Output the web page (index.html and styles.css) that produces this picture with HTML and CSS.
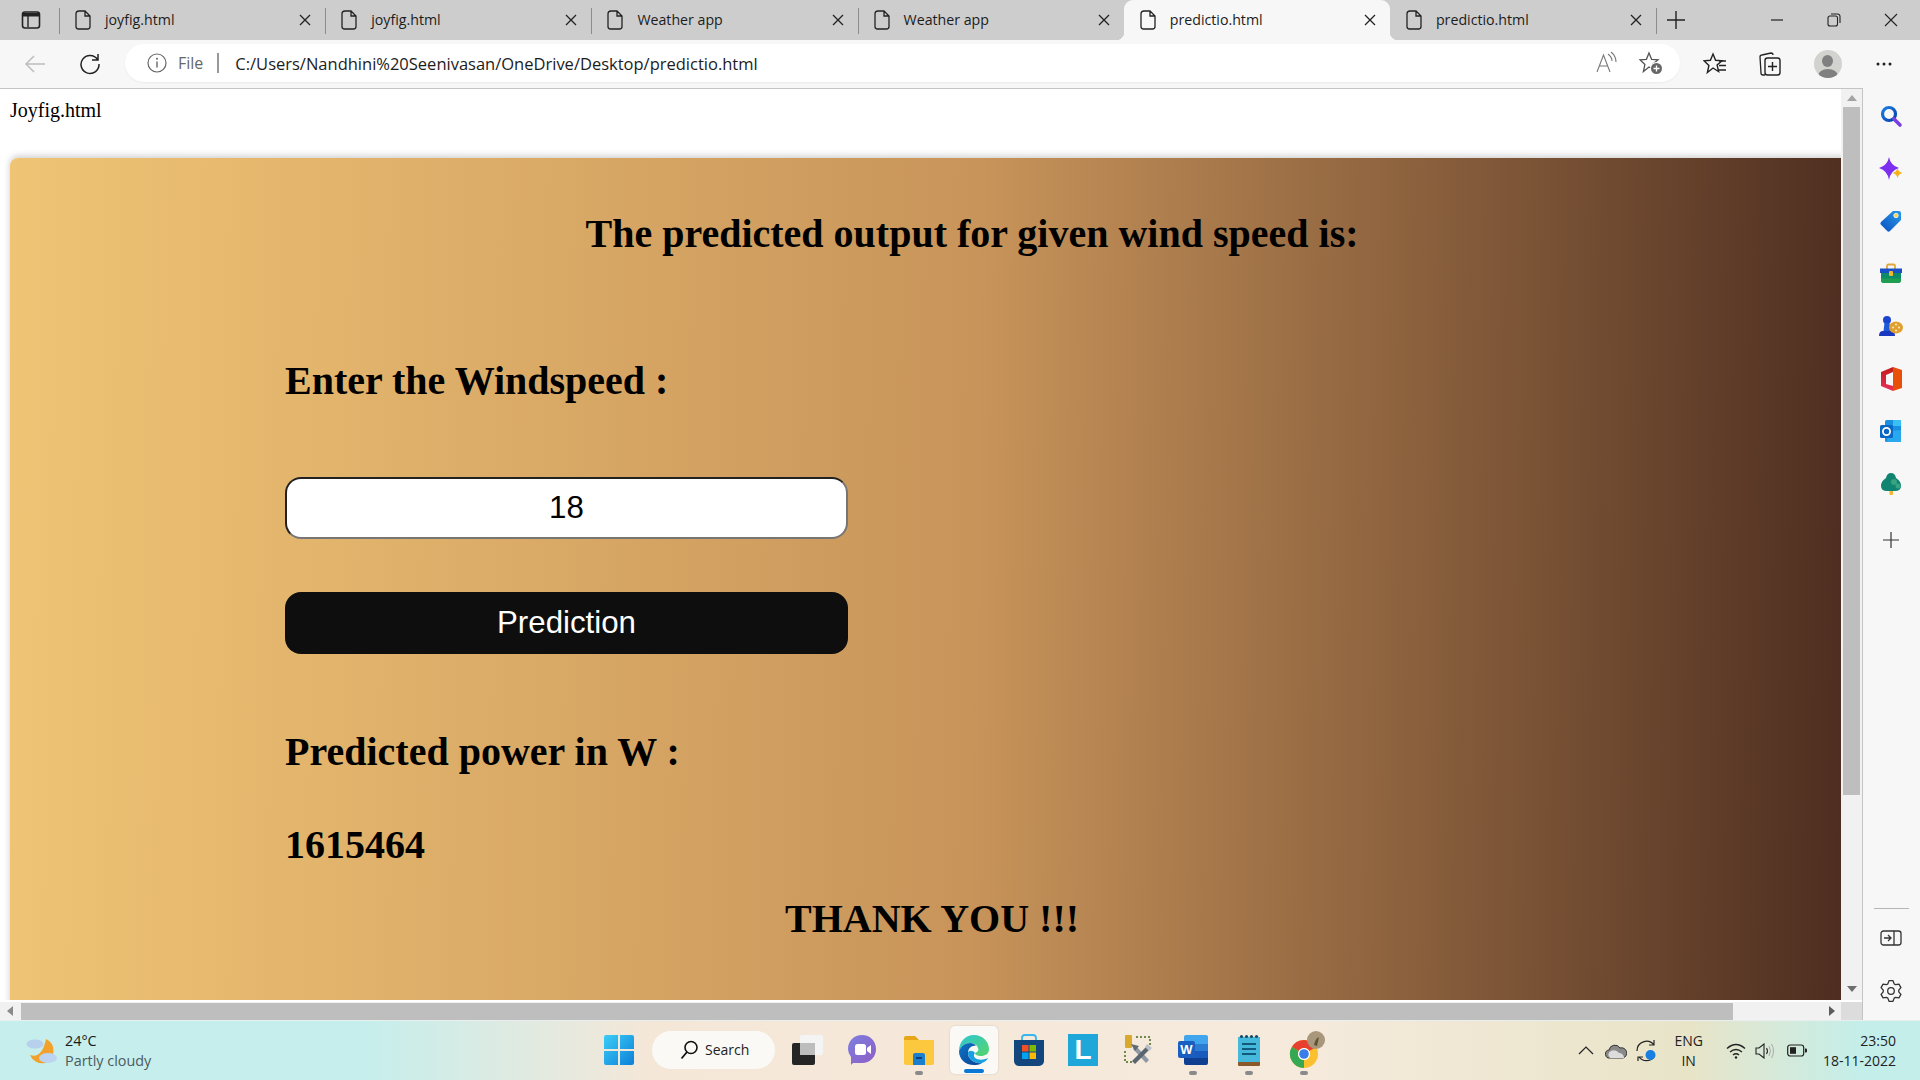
FILE: index.html
```html
<!DOCTYPE html>
<html lang="en">
<head>
<meta charset="utf-8">
<title>predictio.html</title>
<link rel="stylesheet" href="styles.css">
</head>
<body>
<div class="app">
  <div class="tabstrip">
    <div class="tabstart">
      <svg width="20" height="18" viewBox="0 0 20 18"><rect x="1.500" y="1" width="17" height="16" rx="2.500" fill="none" stroke="#222" stroke-width="1.600"/><path d="M2 2h16v3.500H2z" fill="#222"/><path d="M7 5v11" stroke="#222" stroke-width="1.400"/></svg>
    </div>
    <div class="tab sep"><svg class="doc" viewBox="0 0 16 20"><path d="M4 1h6l5 5v10.500a2.500 2.500 0 0 1-2.500 2.500h-9A2.500 2.500 0 0 1 1 16.500V4a3 3 0 0 1 3-3zM10 1v5h5" fill="none" stroke="#222" stroke-width="1.300"/></svg><span class="tabtitle">joyfig.html</span><svg class="x" viewBox="0 0 12 12"><path d="M1 1l10 10M11 1L1 11" stroke="#222" stroke-width="1.300"/></svg></div>
    <div class="tab sep"><svg class="doc" viewBox="0 0 16 20"><path d="M4 1h6l5 5v10.500a2.500 2.500 0 0 1-2.500 2.500h-9A2.500 2.500 0 0 1 1 16.500V4a3 3 0 0 1 3-3zM10 1v5h5" fill="none" stroke="#222" stroke-width="1.300"/></svg><span class="tabtitle">joyfig.html</span><svg class="x" viewBox="0 0 12 12"><path d="M1 1l10 10M11 1L1 11" stroke="#222" stroke-width="1.300"/></svg></div>
    <div class="tab sep"><svg class="doc" viewBox="0 0 16 20"><path d="M4 1h6l5 5v10.500a2.500 2.500 0 0 1-2.500 2.500h-9A2.500 2.500 0 0 1 1 16.500V4a3 3 0 0 1 3-3zM10 1v5h5" fill="none" stroke="#222" stroke-width="1.300"/></svg><span class="tabtitle">Weather app</span><svg class="x" viewBox="0 0 12 12"><path d="M1 1l10 10M11 1L1 11" stroke="#222" stroke-width="1.300"/></svg></div>
    <div class="tab"><svg class="doc" viewBox="0 0 16 20"><path d="M4 1h6l5 5v10.500a2.500 2.500 0 0 1-2.500 2.500h-9A2.500 2.500 0 0 1 1 16.500V4a3 3 0 0 1 3-3zM10 1v5h5" fill="none" stroke="#222" stroke-width="1.300"/></svg><span class="tabtitle">Weather app</span><svg class="x" viewBox="0 0 12 12"><path d="M1 1l10 10M11 1L1 11" stroke="#222" stroke-width="1.300"/></svg></div>
    <div class="tab active"><svg class="doc" viewBox="0 0 16 20"><path d="M4 1h6l5 5v10.500a2.500 2.500 0 0 1-2.500 2.500h-9A2.500 2.500 0 0 1 1 16.500V4a3 3 0 0 1 3-3zM10 1v5h5" fill="none" stroke="#222" stroke-width="1.300"/></svg><span class="tabtitle">predictio.html</span><svg class="x" viewBox="0 0 12 12"><path d="M1 1l10 10M11 1L1 11" stroke="#222" stroke-width="1.300"/></svg></div>
    <div class="tab sep"><svg class="doc" viewBox="0 0 16 20"><path d="M4 1h6l5 5v10.500a2.500 2.500 0 0 1-2.500 2.500h-9A2.500 2.500 0 0 1 1 16.500V4a3 3 0 0 1 3-3zM10 1v5h5" fill="none" stroke="#222" stroke-width="1.300"/></svg><span class="tabtitle">predictio.html</span><svg class="x" viewBox="0 0 12 12"><path d="M1 1l10 10M11 1L1 11" stroke="#222" stroke-width="1.300"/></svg></div>
    <div class="newtab"><svg width="18" height="18" viewBox="0 0 18 18"><path d="M9 0v18M0 9h18" stroke="#222" stroke-width="1.400"/></svg></div>
    <div class="wincontrols">
      <div class="winbtn"><svg width="12" height="12" viewBox="0 0 12 12"><path d="M0 6h12" stroke="#222" stroke-width="1.200"/></svg></div>
      <div class="winbtn"><svg width="14" height="14" viewBox="0 0 14 14"><rect x="1" y="3" width="9.500" height="10" rx="2" fill="none" stroke="#222" stroke-width="1.100"/><path d="M4 1h6.500A2.500 2.500 0 0 1 13 3.500V10" fill="none" stroke="#222" stroke-width="1.100"/></svg></div>
      <div class="winbtn"><svg width="14" height="14" viewBox="0 0 14 14"><path d="M1 1l12 12M13 1L1 13" stroke="#222" stroke-width="1.100"/></svg></div>
    </div>
  </div>

  <div class="toolbar">
    <div class="toolslot"><svg width="22" height="20" viewBox="0 0 22 20"><path d="M21 10H2M10 2l-8 8 8 8" fill="none" stroke="#bdbdbd" stroke-width="1.500"/></svg></div>
    <div class="toolslot"><svg width="22" height="22" viewBox="0 0 22 22"><path d="M18.500 6.500A9 9 0 1 0 20 11M19 1v6h-6" fill="none" stroke="#222" stroke-width="1.500"/></svg></div>
    <div class="addressbar">
      <svg class="info" width="20" height="20" viewBox="0 0 20 20"><circle cx="10" cy="10" r="9" fill="none" stroke="#666" stroke-width="1.200"/><path d="M10 8.500v6" stroke="#666" stroke-width="1.400"/><circle cx="10" cy="5.800" r="1" fill="#666"/></svg>
      <span class="scheme">File</span>
      <span class="addrsep"></span>
      <span class="url">C:/Users/Nandhini%20Seenivasan/OneDrive/Desktop/predictio.html</span>
      <div class="addricons">
        <svg width="24" height="24" viewBox="0 0 24 24"><path d="M2 21L8.500 4 15 21M4.500 15h8" fill="none" stroke="#777" stroke-width="1.100"/><path d="M13 3q4 3 4 7M16 1q5 4 5 10" fill="none" stroke="#777" stroke-width="1.100"/></svg>
        <svg width="24" height="24" viewBox="0 0 24 24"><path d="M10 2l2.600 6.300 6.400.5-4.900 4.200 1.500 6.500L10 16l-5.600 4.500 1.500-7L1 8.800l6.400-.5z" fill="none" stroke="#555" stroke-width="1.300"/><circle cx="17.500" cy="17.500" r="6.500" fill="#fff"/><circle cx="17.500" cy="17.500" r="5.500" fill="#666"/><path d="M17.500 14.500v6M14.500 17.500h6" stroke="#fff" stroke-width="1.300"/></svg>
      </div>
    </div>
    <div class="toolslot first"><svg width="24" height="24" viewBox="0 0 24 24"><path d="M10 2l2.600 6.300 6.400.5-4.900 4.200 1.500 6.500L10 16l-5.600 4.500 1.500-7L1 8.800l6.400-.5z" fill="none" stroke="#222" stroke-width="1.400"/><path d="M16 9h7M16 13.500h7M15 18h8" stroke="#222" stroke-width="1.400"/></svg></div>
    <div class="toolslot"><svg width="24" height="26" viewBox="0 0 24 26"><path d="M7 24H5a2 2 0 0 1-2-2L2 6a2 2 0 0 1 2-2l9-2a2 2 0 0 1 2 2" fill="none" stroke="#222" stroke-width="1.300"/><rect x="7" y="7" width="15" height="17" rx="2.500" fill="#f7f7f7" stroke="#222" stroke-width="1.400"/><path d="M14.500 11v9M10 15.500h9" stroke="#222" stroke-width="1.400"/></svg></div>
    <div class="toolslot av"><div class="avatar"><span class="avhead"></span><span class="avbody"></span></div></div>
    <div class="toolslot dots"><svg width="16" height="4" viewBox="0 0 16 4"><circle cx="2" cy="2" r="1.500" fill="#222"/><circle cx="8" cy="2" r="1.500" fill="#222"/><circle cx="14" cy="2" r="1.500" fill="#222"/></svg></div>
  </div>

  <div class="mainrow">
    <div class="pagecol">
      <div class="pagerow">
        <div class="viewport">
          <p class="filename">Joyfig.html</p>
          <div class="card">
            <h2 class="title">The predicted output for given wind speed is:</h2>
            <div class="form">
              <h2 class="enter">Enter the Windspeed :</h2>
              <input class="speed" type="text" value="18">
              <button class="predict" type="button">Prediction</button>
              <h2 class="powerlabel">Predicted power in W :</h2>
              <h2 class="powervalue">1615464</h2>
            </div>
            <h2 class="thanks">THANK YOU !!!</h2>
          </div>
        </div>
        <div class="vscroll">
          <span class="arrow up"></span>
          <div class="vthumb"></div>
          <span class="arrow down"></span>
        </div>
      </div>
      <div class="hscroll">
        <span class="arrow left"></span>
        <div class="hthumb"></div>
        <span class="arrow right"></span>
        <span class="corner"></span>
      </div>
    </div>

    <aside class="sidebar">
      <div class="sideslot"><svg width="24" height="24" viewBox="0 0 24 24"><defs><linearGradient id="sa" x1="0" y1="0" x2="1" y2="1"><stop offset="0" stop-color="#1a7fe0"/><stop offset="1" stop-color="#0a3fb0"/></linearGradient></defs><circle cx="10" cy="10" r="6.500" fill="none" stroke="url(#sa)" stroke-width="3.200"/><path d="M15 15l6 6" stroke="#7a3fe0" stroke-width="3.600" stroke-linecap="round"/></svg></div>
      <div class="sideslot"><svg width="24" height="24" viewBox="0 0 24 24"><path d="M10 0q1.500 8.500 10 11-8.500 2.500-10 12-1.500-9.500-10-12 8.500-2.500 10-11z" fill="#7d2ff0"/><path d="M18.500 11q.8 4 5 5-4.200 1-5 5-.8-4-5-5 4.200-1 5-5z" fill="#f5b21a"/></svg></div>
      <div class="sideslot"><svg width="24" height="24" viewBox="0 0 24 24"><defs><linearGradient id="sb" x1="0" y1="1" x2="1" y2="0"><stop offset="0" stop-color="#0a4fc0"/><stop offset="1" stop-color="#2a9ae8"/></linearGradient></defs><path d="M14 2h6a2 2 0 0 1 2 2v7L11 22a2 2 0 0 1-2.800 0L2 15.800a2 2 0 0 1 0-2.800z" fill="url(#sb)"/><circle cx="17" cy="6.500" r="2.200" fill="#f8d24a" stroke="#fff" stroke-width=".8"/></svg></div>
      <div class="sideslot"><svg width="24" height="24" viewBox="0 0 24 24"><path d="M8 7V4a1.500 1.500 0 0 1 1.500-1.500h5A1.500 1.500 0 0 1 16 4v3" fill="none" stroke="#e0a83a" stroke-width="1.800"/><path d="M1 6.500h22V11H1z" fill="#1a4fc8"/><path d="M2 11h20v7a3 3 0 0 1-3 3H5a3 3 0 0 1-3-3z" fill="#0c8a6a"/><path d="M2 16.500h20V18a3 3 0 0 1-3 3H5a3 3 0 0 1-3-3z" fill="#1f9e50"/><rect x="10" y="9" width="4" height="5" rx="1" fill="#f2b632"/></svg></div>
      <div class="sideslot"><svg width="24" height="24" viewBox="0 0 24 24"><circle cx="8" cy="6" r="4" fill="#1c46d0"/><path d="M5.500 9h5l1 8h-7z" fill="#1c5ad8"/><path d="M0 22q0-5 4-5h8q4 0 4 5z" fill="#1838c0"/><ellipse cx="17" cy="13.500" rx="7" ry="6" fill="#e0a030"/><g fill="#fbe6b0"><circle cx="17" cy="10.500" r="1.100"/><circle cx="14" cy="13.500" r="1.100"/><circle cx="20" cy="13.500" r="1.100"/><circle cx="17" cy="16.500" r="1.100"/></g></svg></div>
      <div class="sideslot"><svg width="24" height="26" viewBox="0 0 24 26"><defs><linearGradient id="sc" x1="0" y1="0" x2="0" y2="1"><stop offset="0" stop-color="#c01c1c"/><stop offset="1" stop-color="#e8305a"/></linearGradient></defs><path d="M2 6L14 1v5L7 9v9l7 2v5L2 20z" fill="url(#sc)"/><path d="M14 1l9 3v18l-9 3z" fill="#e8500a"/></svg></div>
      <div class="sideslot"><svg width="24" height="24" viewBox="0 0 24 24"><rect x="6" y="1" width="16" height="22" rx="1.500" fill="#1a8fe0"/><path d="M14 1h7a1 1 0 0 1 1 1v5h-8z" fill="#38c0f4"/><path d="M10 12l12-1v11a1 1 0 0 1-1 1H8z" fill="#28a8ee"/><rect x="1" y="6" width="13" height="13" rx="1.500" fill="#0a68c4"/><circle cx="7.500" cy="12.500" r="3.600" fill="none" stroke="#fff" stroke-width="1.800"/></svg></div>
      <div class="sideslot"><svg width="24" height="24" viewBox="0 0 24 24"><rect x="10.500" y="18" width="3.500" height="5" rx="1" fill="#f2b632"/><path d="M12 1q4 0 5 5 5 3 5 8 0 5-6 5H8q-6 0-6-5 0-5 5-8 1-5 5-5z" fill="#0f8470"/><circle cx="15" cy="10" r="3" fill="#3aa380"/><circle cx="19" cy="14" r="2.500" fill="#3aa380"/></svg></div>
      <div class="sideslot addslot"><svg width="16" height="16" viewBox="0 0 16 16"><path d="M8 0v16M0 8h16" stroke="#333" stroke-width="1.200"/></svg></div>
      <div class="sidebottom">
        <div class="sidedivider"></div>
        <div class="sideslot"><svg width="22" height="16" viewBox="0 0 22 16"><rect x="1" y="1" width="20" height="14" rx="2.500" fill="none" stroke="#333" stroke-width="1.300"/><path d="M14 1v14M4 8h7M8 5l3 3-3 3" fill="none" stroke="#333" stroke-width="1.300"/></svg></div>
        <div class="sideslot"><svg width="22" height="22" viewBox="0 0 22 22"><path d="M9 .69h4l1.170 3.180 1.420.82 3.340-.58 2 3.470-2.170 2.600v1.640l2.170 2.600-2 3.470-3.340-.58-1.420.82L13 21.310H9l-1.170-3.180-1.420-.82-3.340.58-2-3.470 2.170-2.600v-1.640L1.070 7.580l2-3.470 3.340.58 1.420-.82z" fill="none" stroke="#333" stroke-width="1.300" stroke-linejoin="round"/><circle cx="11" cy="11" r="3.300" fill="none" stroke="#333" stroke-width="1.300"/></svg></div>
      </div>
    </aside>
  </div>

  <div class="taskbar">
    <div class="weather">
      <svg width="32" height="30" viewBox="0 0 32 30"><path d="M20 3a13 13 0 0 1-1 24A13 13 0 0 1 4 19q12 4 16-16z" fill="#f2a22c"/><ellipse cx="9" cy="8" rx="8.500" ry="4.500" fill="#b6d0ee"/><ellipse cx="22" cy="22" rx="9" ry="5" fill="#bcd4f0"/></svg>
      <div class="weathertext"><span class="temp">24°C</span><span class="cond">Partly cloudy</span></div>
    </div>
    <div class="taskcenter">
      <div class="taskitem win"><svg width="30" height="30" viewBox="0 0 30 30"><defs><linearGradient id="ta" x1="0" y1="0" x2="1" y2="1"><stop offset="0" stop-color="#3ccdf6"/><stop offset="1" stop-color="#0c80d8"/></linearGradient></defs><path d="M2 0h12v14H0V2a2 2 0 0 1 2-2zM16 0h12a2 2 0 0 1 2 2v12H16zM0 16h14v14H2a2 2 0 0 1-2-2zM16 16h14v12a2 2 0 0 1-2 2H16z" fill="url(#ta)"/></svg></div>
      <div class="searchpill"><svg width="18" height="20" viewBox="0 0 18 20"><circle cx="11" cy="7.500" r="6" fill="none" stroke="#111" stroke-width="1.600"/><path d="M7 12l-5.500 6.500" stroke="#111" stroke-width="1.800"/></svg><span>Search</span></div>
      <div class="taskitem taskview"><svg width="32" height="30" viewBox="0 0 32 30"><rect x="9" y="0" width="23" height="20" rx="2" fill="#f4f4f4"/><rect x="1" y="8" width="23" height="22" rx="2" fill="#252525"/><rect x="9" y="8" width="15" height="12" fill="#bdbdbd"/></svg></div>
      <div class="taskitem teams"><svg width="30" height="30" viewBox="0 0 30 30"><defs><linearGradient id="tb" x1="0" y1="0" x2="1" y2="1"><stop offset="0" stop-color="#7d7fe0"/><stop offset="1" stop-color="#8f5cc4"/></linearGradient></defs><path d="M15 0c8 0 14 6 14 14s-6 14-14 14H6l-2 2v-8Q1 18 1 14C1 6 7 0 15 0z" fill="url(#tb)"/><rect x="8" y="9" width="11" height="11" rx="2.500" fill="#fff"/><path d="M20 13l4-3v9l-4-3z" fill="#fff"/></svg></div>
      <div class="taskitem explorer running"><svg width="30" height="30" viewBox="0 0 30 30"><path d="M0 3a2 2 0 0 1 2-2h9l4 4H0z" fill="#e8a518"/><path d="M0 5h30v23a2 2 0 0 1-2 2H2a2 2 0 0 1-2-2z" fill="#fcc93e"/><path d="M9 20a2 2 0 0 1 2-2h8a2 2 0 0 1 2 2v10H9z" fill="#1b7fd0"/><path d="M12 22h6v2h-6z" fill="#0d3f7a"/></svg></div>
      <div class="taskitem edge current"><svg width="32" height="32" viewBox="0 0 32 32"><defs><linearGradient id="tc" x1="0" y1="0" x2="1" y2="1"><stop offset="0" stop-color="#2dc7d6"/><stop offset="1" stop-color="#56d468"/></linearGradient><linearGradient id="td" x1="0" y1="0" x2="1" y2="1"><stop offset="0" stop-color="#0e74c8"/><stop offset="1" stop-color="#0a3f90"/></linearGradient></defs><path d="M16 1C25 1 31 8 31 15c0 5-4 7-8 7-3 0-6-1-6-3 3-1 4-3 3-5-1-3-4-5-8-5C7 9 3 12 1 17 1 8 7 1 16 1z" fill="url(#tc)"/><path d="M1 17c2-5 6-8 11-8 3 0 5 1 6 3-4-1-8 2-8 7 0 6 6 11 14 10-3 2-6 2-8 2C7 31 1 25 1 17z" fill="url(#td)"/><path d="M10 19c0 6 6 11 14 10 3-1 5-3 6-5-4 2-8 2-11 1-3-1-4-4-2-6-2-3-7-3-7 0z" fill="#1aa0e0"/></svg><span class="currentbar"></span></div>
      <div class="taskitem store"><svg width="30" height="32" viewBox="0 0 30 32"><path d="M8 8V4a3 3 0 0 1 3-3h8a3 3 0 0 1 3 3v4" fill="none" stroke="#36b6f0" stroke-width="1.800"/><path d="M0 6h30v21a5 5 0 0 1-5 5H5a5 5 0 0 1-5-5z" fill="#14467e"/><rect x="8" y="11" width="6.500" height="6.500" fill="#f25022"/><rect x="15.500" y="11" width="6.500" height="6.500" fill="#7fba00"/><rect x="8" y="18.500" width="6.500" height="6.500" fill="#00a4ef"/><rect x="15.500" y="18.500" width="6.500" height="6.500" fill="#ffb900"/></svg></div>
      <div class="taskitem ltile"><span>L</span></div>
      <div class="taskitem tools"><svg width="32" height="32" viewBox="0 0 32 32"><rect x="3" y="1" width="7" height="13" rx="1" fill="#d9a92e"/><path d="M14 3h14v14M3 17v11h12" fill="none" stroke="#6f8a4a" stroke-width="2" stroke-dasharray="2 2"/><path d="M11 15l13 14 3-3L14 12z" fill="#8e98a3"/><path d="M24 13L10 27l3 3L27 16z" fill="#5b6570"/><path d="M9 10l8 2-4 5z" fill="#606a74"/><path d="M25 10l5 4-3 3-4-4z" fill="#b7c0c8"/></svg></div>
      <div class="taskitem word running"><svg width="30" height="30" viewBox="0 0 30 30"><path d="M8 0h20a2 2 0 0 1 2 2v7H6V2a2 2 0 0 1 2-2z" fill="#41a5ee"/><rect x="6" y="9" width="24" height="7" fill="#2b7cd3"/><rect x="6" y="16" width="24" height="7" fill="#185abd"/><path d="M6 23h24v5a2 2 0 0 1-2 2H8a2 2 0 0 1-2-2z" fill="#103f91"/><rect x="0" y="6" width="17" height="17" rx="2" fill="#1a5ec0"/><text class="wordw" x="8.500" y="19" text-anchor="middle">W</text></svg></div>
      <div class="taskitem notepad running"><svg width="24" height="32" viewBox="0 0 24 32"><path d="M1 3h22v25H1z" fill="#45b8dc"/><path d="M1 28h22v3a1 1 0 0 1-1 1H2a1 1 0 0 1-1-1z" fill="#8a5a2a"/><g fill="#184a63"><circle cx="4.500" cy="2.500" r="1.600"/><circle cx="9.500" cy="2.500" r="1.600"/><circle cx="14.500" cy="2.500" r="1.600"/><circle cx="19.500" cy="2.500" r="1.600"/></g><path d="M5 10h14M5 15h14M5 20h14" stroke="#125a7c" stroke-width="2"/></svg></div>
      <div class="taskitem chrome running"><svg width="36" height="38" viewBox="0 0 36 38"><g fill="none" stroke-width="8"><circle cx="15" cy="23" r="10" stroke="#fbc02d"/><path d="M6.300 18A10 10 0 0 1 23.700 18" stroke="#e8402f"/><path d="M6.300 18A10 10 0 0 0 15 33" stroke="#34a853"/></g><circle cx="15" cy="23" r="6" fill="#fff"/><circle cx="15" cy="23" r="4.800" fill="#3b7de8"/><circle cx="27" cy="9" r="9" fill="#a8977a"/><path d="M25 14q1-6 5-8l-2 9z" fill="#5d5438"/></svg></div>
    </div>
    <div class="tray">
      <svg class="t-chev" width="16" height="9" viewBox="0 0 16 9"><path d="M1 8l7-7 7 7" fill="none" stroke="#222" stroke-width="1.200"/></svg>
      <svg class="t-cloud" width="22" height="16" viewBox="0 0 22 16"><path d="M5 15a4 4 0 0 1-1-8 6 6 0 0 1 11-2 5 5 0 0 1 3 10z" fill="#8a8a8a" stroke="#333" stroke-width="1"/><path d="M5 15a4 4 0 0 1 1-7 6 6 0 0 1 8 2 5 5 0 0 1 5 5z" fill="#dcdcdc"/></svg>
      <svg class="t-sync" width="24" height="24" viewBox="0 0 24 24"><path d="M2 12a9.500 9.500 0 0 1 17-6M19 1v5h-5M19 18a9.500 9.500 0 0 1-15 0M3 22v-4h5" fill="none" stroke="#222" stroke-width="1.200"/><circle cx="15.500" cy="16" r="5" fill="#1a7de0"/></svg>
      <div class="lang"><span>ENG</span><span>IN</span></div>
      <svg class="t-wifi" width="20" height="16" viewBox="0 0 20 16"><path d="M1 5.500q9-8 18 0M4 9q6-5 12 0M7 12q3-2.500 6 0" fill="none" stroke="#222" stroke-width="1.400"/><circle cx="10" cy="14.500" r="1.200" fill="#222"/></svg>
      <svg class="t-vol" width="20" height="16" viewBox="0 0 20 16"><path d="M1 5h3l5-4v14l-5-4H1z" fill="none" stroke="#222" stroke-width="1.100"/><path d="M11.500 5q2 3 0 6" fill="none" stroke="#222" stroke-width="1.100"/><path d="M14 3q3 5 0 10M16.500 1q4 7 0 14" fill="none" stroke="#aaa" stroke-width="1"/></svg>
      <svg class="t-batt" width="20" height="13" viewBox="0 0 20 13"><rect x=".7" y="1" width="16" height="11" rx="2.500" fill="none" stroke="#222" stroke-width="1.200"/><rect x="3" y="3.200" width="6" height="6.600" fill="#222"/><path d="M18 4.500h1a1 1 0 0 1 1 1v2a1 1 0 0 1-1 1h-1z" fill="#222"/></svg>
      <div class="clock"><span>23:50</span><span>18-11-2022</span></div>
    </div>
  </div>
</div>
</body>
</html>
```
FILE: styles.css
```css
* { box-sizing: border-box; }
html, body { margin: 0; height: 100%; overflow: hidden; }
body { font-family: "Open Sans", "Liberation Sans", sans-serif; color: #1c1c1c; }
svg { display: block; flex: none; }

.app { width: 1920px; height: 1080px; display: flex; flex-direction: column; background: #f7f7f7; }

/* Tab strip */
.tabstrip { height: 40px; display: flex; background: #cdcdcd; flex: none; }
.tabstart { width: 59px; display: flex; align-items: center; padding-left: 21px; position: relative; }
.tabstart::after { content: ""; position: absolute; right: -1px; top: 8px; bottom: 6px; width: 1px; background: #8c8c8c; }
.tab { width: 266.2px; display: flex; align-items: center; padding: 0 14px 0 16px; position: relative; }
.tab.sep::after { content: ""; position: absolute; right: -1px; top: 8px; bottom: 6px; width: 1px; background: #8c8c8c; }
.tab.active { background: #f7f7f7; border-radius: 9px 9px 0 0; }
.tab.active::before, .tab.active::after { content: ""; position: absolute; bottom: 0; width: 8px; height: 8px; }
.tab.active::before { left: -8px; background: radial-gradient(circle at 0 0, transparent 8px, #f7f7f7 8.5px); }
.tab.active::after { right: -8px; background: radial-gradient(circle at 100% 0, transparent 8px, #f7f7f7 8.5px); }
.doc { width: 16px; height: 20px; }
.tabtitle { margin: 0 0 1px 14px; flex: 1; font-size: 14.2px; }
.x { width: 12px; height: 12px; }
.newtab { width: 40px; display: flex; align-items: center; justify-content: center; }
.wincontrols { display: flex; margin-left: auto; margin-right: 1px; }
.winbtn { width: 57px; display: flex; align-items: center; justify-content: center; }

/* Toolbar */
.toolbar { height: 48px; display: flex; align-items: center; padding-left: 7px; flex: none; }
.toolslot { width: 55px; height: 100%; display: flex; align-items: center; justify-content: center; }
.toolslot.first { margin-left: 7px; }
.toolslot.av { margin-left: 3px; }
.toolslot.dots { margin-left: 1px; }
.addressbar { width: 1555px; height: 38px; margin-left: 8px; margin-bottom: 2px; background: #fff; border-radius: 19px; display: flex; align-items: center; padding-left: 22px; padding-right: 17px; box-shadow: 0 1px 2px rgba(0,0,0,.05); }
.scheme { margin-left: 11px; font-size: 16px; color: #666; }
.addrsep { width: 2px; height: 20px; background: #999; margin-left: 14px; }
.url { margin-left: 16px; font-size: 16.5px; color: #1c1c1c; }
.addricons { margin-left: auto; display: flex; gap: 20px; }
.avatar { width: 28px; height: 28px; border-radius: 50%; background: #d2d2ce; display: flex; flex-direction: column; align-items: center; overflow: hidden; padding-top: 5px; }
.avhead { width: 11px; height: 12px; border-radius: 50%; background: #808080; flex: none; }
.avbody { width: 20px; height: 14px; border-radius: 50%; background: #808080; margin-top: 2px; flex: none; }

/* Main area */
.mainrow { flex: 1; min-height: 0; display: flex; }
.pagecol { width: 1863px; display: flex; flex-direction: column; border-top: 1px solid #c4c4c4; border-right: 1px solid #c4c4c4; }
.pagerow { flex: 1; min-height: 0; display: flex; }
.viewport { width: 1841px; overflow: hidden; background: #fff; padding: 10px 0 0 10px; font-family: "Liberation Serif", serif; color: #000; }
.filename { margin: 0; font-size: 20px; line-height: 23px; }
.card { width: 1924px; height: 1200px; margin-top: 36px; border-radius: 8px 8px 0 0; padding-top: 53px; background: linear-gradient(91deg, #efc475 0%, #c8945a 50%, #40221a 100%); box-shadow: 0 -2px 7px rgba(0,0,0,.2); }
h2 { margin: 0; font-size: 40px; line-height: 46px; font-weight: 700; color: #000; }
.title { text-align: center; }
.form { padding-left: 275px; display: flex; flex-direction: column; align-items: flex-start; }
.enter { margin-top: 101px; }
.speed { width: 563px; height: 62px; margin-top: 73px; border-radius: 16px; border: 2px solid; border-color: #222 #767676 #767676 #222; background: #fff; font: 31.25px "Liberation Sans", sans-serif; text-align: center; color: #000; padding: 0; outline: 0; }
.predict { width: 563px; height: 62px; margin-top: 53px; border-radius: 16px; border: 0; background: #0e0e0e; color: #fff; font: 31.25px "Liberation Sans", sans-serif; padding: 0; }
.powerlabel { margin-top: 75px; }
.powervalue { margin-top: 47px; }
.thanks { margin-top: 28px; padding-left: 775px; }

/* Scrollbars */
.vscroll { width: 21px; background: #f1f1f1; display: flex; flex-direction: column; align-items: center; padding: 6px 0 8px; }
.vthumb { width: 17px; height: 688px; background: #bebebe; margin-top: 6px; }
.vscroll .down { margin-top: auto; }
.arrow { display: block; width: 0; height: 0; border: 5px solid transparent; flex: none; }
.arrow.up { border-top: 0; border-bottom: 6px solid #a3a3a3; }
.arrow.down { border-bottom: 0; border-top: 6px solid #6e6e6e; }
.hscroll { height: 20px; flex: none; background: #f1f1f1; display: flex; align-items: center; border-top: 2px solid #fff; padding-left: 7px; }
.arrow.left { border-left: 0; border-right: 6px solid #8a8a8a; }
.arrow.right { border-right: 0; border-left: 6px solid #5c5c5c; margin-left: 96px; }
.hthumb { width: 1712px; height: 17px; background: #bebebe; margin-left: 8px; }
.corner { width: 21px; height: 100%; background: #dcdcdc; margin-left: auto; }

/* Sidebar */
.sidebar { flex: 1; display: flex; flex-direction: column; align-items: center; padding: 2px 1px 3px 0; }
.sideslot { height: 52.5px; display: flex; align-items: center; justify-content: center; flex: none; }
.addslot { margin-top: 4px; }
.sidebottom { margin-top: auto; display: flex; flex-direction: column; align-items: center; }
.sidedivider { width: 35px; height: 1px; background: #b5b5b5; margin-bottom: 3px; }

/* Taskbar */
.taskbar { height: 60px; flex: none; display: flex; align-items: center; position: relative; border-top: 1px solid #e9eeee; background: linear-gradient(90deg, #c6eeec 0%, #c6eeec 19%, #f5e7d8 34%, #f5eadc 68%, #e8e4c8 88%, #c4eeea 97%); }
.weather { width: 590px; display: flex; align-items: center; padding-left: 26px; }
.weathertext { display: flex; flex-direction: column; margin-left: 7px; font-size: 14.4px; line-height: 20px; }
.temp { color: #1a1a1a; }
.cond { color: #4b5b5e; }
.taskcenter { display: flex; align-items: center; height: 100%; padding-bottom: 2px; }
.taskitem { height: 48px; display: flex; align-items: center; justify-content: center; position: relative; flex: none; }
.taskitem.running::after { content: ""; position: absolute; bottom: -1px; left: 50%; width: 8px; height: 4px; margin-left: -4px; border-radius: 2px; background: #8a8a8a; }
.win { width: 48px; margin-left: 5px; }
.searchpill { width: 123px; height: 38px; border-radius: 19px; background: #fbf9f6; margin-left: 9px; display: flex; align-items: center; padding-left: 28px; gap: 7px; font-size: 14px; color: #222; flex: none; }
.taskview { width: 58px; margin-left: 3px; }
.teams { width: 52px; }
.explorer { width: 62px; }
.edge { width: 48px; background: #fbf9f6; border-radius: 5px; box-shadow: 0 0 2px rgba(0,0,0,.15); }
.currentbar { position: absolute; bottom: 1px; left: 50%; width: 20px; height: 4px; margin-left: -10px; border-radius: 2px; background: #0a78d4; }
.store { width: 61px; }
.ltile { width: 48px; }
.ltile span { width: 30px; height: 32px; background: #1ea7d8; color: #fff; font: 700 28px/32px "Liberation Sans", sans-serif; text-align: center; display: block; }
.tools { width: 62px; }
.word { width: 48px; }
.wordw { font: 700 13px "Liberation Sans", sans-serif; fill: #fff; }
.notepad { width: 64px; }
.chrome { width: 46px; padding-left: 6px; }
.tray { position: absolute; top: 0; bottom: 0; right: 0; display: flex; align-items: center; padding-right: 24px; }
.t-chev { margin-right: 11px; }
.t-cloud { margin-right: 8px; }
.t-sync { margin-right: 15px; }
.lang { display: flex; flex-direction: column; align-items: center; font-size: 14px; line-height: 20px; margin-right: 23px; color: #222; }
.t-wifi { margin-right: 9px; }
.t-vol { margin-right: 12px; }
.t-batt { margin-right: 16px; }
.clock { display: flex; flex-direction: column; align-items: flex-end; font-size: 14px; line-height: 20px; color: #222; }
```
